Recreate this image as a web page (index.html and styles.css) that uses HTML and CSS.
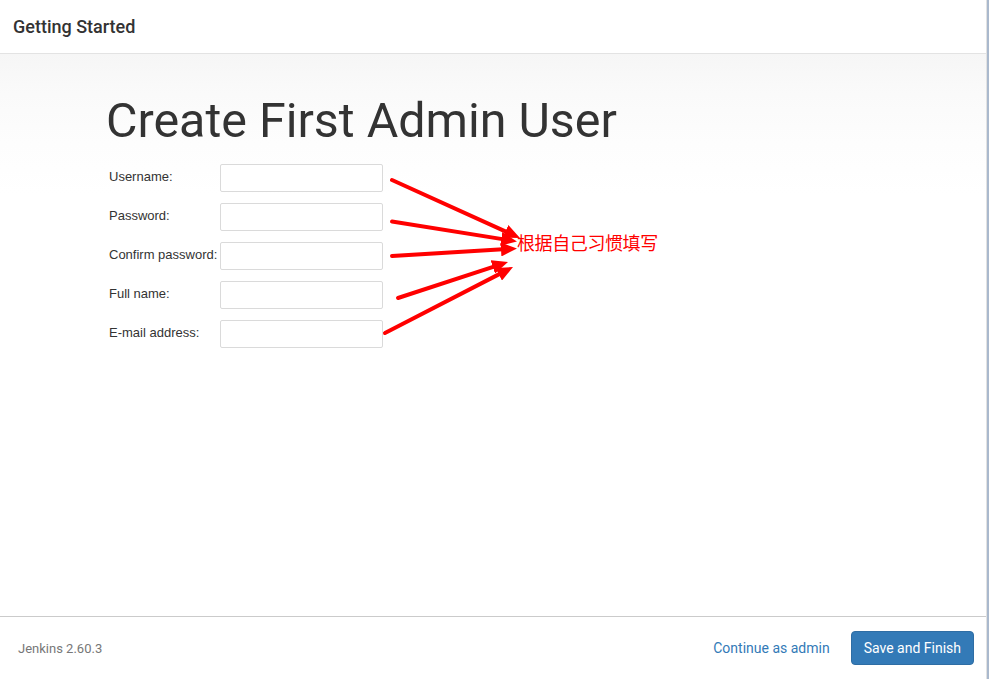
FILE: index.html
```html
<!DOCTYPE html>
<html lang="en">
<head>
<meta charset="utf-8">
<title>Getting Started</title>
<link rel="stylesheet" href="styles.css">
</head>
<body>
<div class="dialog">
  <header class="dialog-header">Getting Started</header>
  <main class="dialog-body">
    <h1 class="title">Create First Admin User</h1>
    <form class="user-form">
      <label class="field-label" for="username">Username:</label>
      <input class="field-input" id="username" type="text">
      <label class="field-label" for="password1">Password:</label>
      <input class="field-input" id="password1" type="password">
      <label class="field-label" for="password2">Confirm password:</label>
      <input class="field-input" id="password2" type="password">
      <label class="field-label" for="fullname">Full name:</label>
      <input class="field-input" id="fullname" type="text">
      <label class="field-label" for="email">E-mail address:</label>
      <input class="field-input" id="email" type="text">
    </form>
  </main>
  <footer class="dialog-footer">
    <span class="version">Jenkins 2.60.3</span>
    <a class="skip-link" href="#">Continue as admin</a>
    <button class="btn-primary" type="button">Save and Finish</button>
  </footer>

  <svg class="annotation-arrows" width="989" height="679" viewBox="0 0 989 679" aria-hidden="true">
    <defs>
      <marker id="head" viewBox="0 0 16 14" refX="6" refY="7" markerWidth="16" markerHeight="14" markerUnits="userSpaceOnUse" orient="auto">
        <path d="M0,0 L16,7 L0,14 z" fill="#ff0000"/>
      </marker>
    </defs>
    <g stroke="#ff0000" stroke-width="4" stroke-linecap="round" fill="none" marker-end="url(#head)">
      <line x1="392" y1="180" x2="510.9" y2="233.9"/>
      <line x1="392" y1="221.5" x2="507.1" y2="239.9"/>
      <line x1="392" y1="256" x2="507" y2="249.1"/>
      <line x1="398" y1="298" x2="498.5" y2="265.1"/>
      <line x1="385" y1="333" x2="504.1" y2="271.6"/>
    </g>
  </svg>
  <div class="annotation-note">根据自己习惯填写</div>
</div>
</body>
</html>
```

FILE: styles.css
```css
html, body {
  margin: 0;
  padding: 0;
}

body {
  background: #aab9cd;
  width: 989px;
  height: 679px;
  overflow: hidden;
}

.dialog {
  position: relative;
  width: 986px;
  height: 679px;
  border-right: 1px solid #e2e2e2;
  background: #ffffff;
  display: flex;
  flex-direction: column;
  font-family: Roboto, "Liberation Sans", Arial, sans-serif;
  color: #333333;
}

.dialog-header {
  height: 53px;
  line-height: 53px;
  padding-left: 13px;
  font-size: 18px;
  font-weight: 500;
  color: #333333;
  border-bottom: 1px solid #e3e3e3;
}

.dialog-body {
  flex: 1;
  background: linear-gradient(to bottom, #f6f6f6 0px, #fafafa 40px, #fdfdfd 90px, #ffffff 140px);
  padding-top: 39px;
}

.title {
  margin: 0 0 15px 0;
  padding-left: 106px;
  font-size: 48.4px;
  line-height: 56px;
  font-weight: 400;
  color: #333333;
}

.user-form {
  display: grid;
  grid-template-columns: 111px 163px;
  row-gap: 11px;
  margin-left: 109px;
}

.field-label {
  font-family: "Liberation Sans", Arial, sans-serif;
  font-size: 13px;
  line-height: 15px;
  padding-top: 5px;
  color: #333333;
  white-space: nowrap;
}

.field-input {
  box-sizing: border-box;
  width: 163px;
  height: 28px;
  margin: 0;
  padding: 2px 6px;
  border: 1px solid #dadada;
  border-radius: 2px;
  background: #ffffff;
  font-family: "Liberation Sans", Arial, sans-serif;
  font-size: 13px;
}

.dialog-footer {
  height: 62px;
  border-top: 1px solid #cbcbcb;
  background: #ffffff;
  display: flex;
  align-items: center;
  padding: 0 12px 0 18px;
}

.version {
  flex: 1;
  font-size: 13px;
  color: #777777;
}

.skip-link {
  font-size: 14px;
  color: #337ab7;
  text-decoration: none;
  margin-right: 21px;
}

.btn-primary {
  font-family: Roboto, "Liberation Sans", Arial, sans-serif;
  font-size: 14px;
  line-height: 20px;
  padding: 6px 12px;
  border: 1px solid #2e6da4;
  border-radius: 4px;
  background: #337ab7;
  color: #ffffff;
}

.annotation-arrows {
  position: absolute;
  left: 0;
  top: 0;
  pointer-events: none;
}

.annotation-note {
  position: absolute;
  left: 517px;
  top: 231px;
  font-family: "Noto Sans CJK SC", "Noto Sans", sans-serif;
  font-size: 18px;
  line-height: 22px;
  letter-spacing: -0.4px;
  color: #ff0000;
  white-space: nowrap;
}
```
